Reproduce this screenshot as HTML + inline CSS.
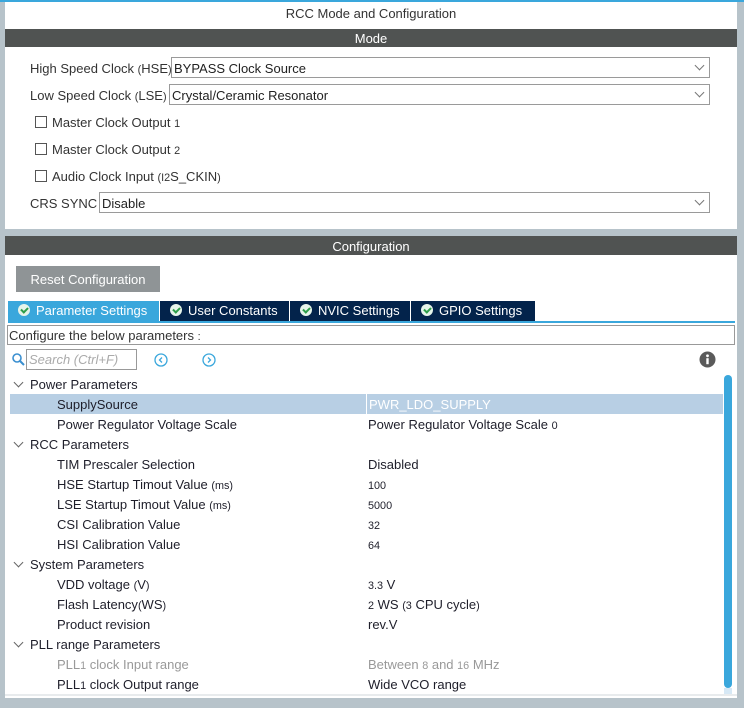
<!DOCTYPE html><html><head><meta charset="utf-8"><style>
*{margin:0;padding:0;box-sizing:border-box}
body{width:744px;height:708px;background:#b7c3ca;font-family:"Liberation Sans",sans-serif;font-size:13px;color:#333;position:relative;overflow:hidden}
.a{position:absolute;white-space:nowrap}
.sel{position:absolute;height:21px;border:1px solid #9a9a9a;background:#fff;padding:3px 0 0 2px;color:#222}
.sel:after{content:"";position:absolute;right:6px;top:4px;width:6px;height:6px;border-right:1px solid #777;border-bottom:1px solid #777;transform:rotate(45deg)}
.cb{position:absolute;width:12px;height:12px;border:1px solid #555;background:#fff}
.tab{position:absolute;top:301px;height:20px;background:#03234b;color:#fff;padding:2px 0 0 0;font-size:13px}
.tab i{display:inline-block;width:12px;height:12px;border-radius:50%;background:#e6f4ea;position:relative;vertical-align:-1px;margin:0 6px 0 10px}
.tab i:after{content:"";position:absolute;left:4px;top:2px;width:3px;height:5px;border-right:2px solid #2e9e4a;border-bottom:2px solid #2e9e4a;transform:rotate(45deg)}
.r{position:absolute;left:10px;width:713px;height:20px;color:#1e1e2a;padding-top:3px}
.r b{font-weight:normal;position:absolute;left:47px}
.r s{text-decoration:none;position:absolute;left:358px}
.h b{left:20px}
.h:before{content:"";position:absolute;left:5px;top:5px;width:6px;height:6px;border-right:1px solid #666;border-bottom:1px solid #666;transform:rotate(45deg)}
.g{color:#999}
</style></head><body>
<div class="a" style="left:0;top:0;width:744px;height:2px;background:#3aa7dc"></div>
<div class="a" style="left:5px;top:2px;width:732px;height:227px;background:#fff"></div>
<div class="a" style="left:5px;top:6px;width:732px;text-align:center;font-size:13px;color:#333">RCC Mode and Configuration</div>
<div class="a" style="left:5px;top:29px;width:732px;height:18px;background:#505352;color:#fff;text-align:center;padding-top:2px">Mode</div>
<div class="a" style="left:30px;top:61px">High Speed Clock <small>(</small>HSE<small>)</small></div>
<div class="sel" style="left:171px;top:57px;width:539px">BYPASS Clock Source</div>
<div class="a" style="left:30px;top:88px">Low Speed Clock <small>(</small>LSE<small>)</small></div>
<div class="sel" style="left:169px;top:84px;width:541px">Crystal/Ceramic Resonator</div>
<div class="cb" style="left:35px;top:116px"></div><div class="a" style="left:52px;top:115px">Master Clock Output <small>1</small></div>
<div class="cb" style="left:35px;top:143px"></div><div class="a" style="left:52px;top:142px">Master Clock Output <small>2</small></div>
<div class="cb" style="left:35px;top:170px"></div><div class="a" style="left:52px;top:169px">Audio Clock Input <small>(I2</small>S_CKIN<small>)</small></div>
<div class="a" style="left:30px;top:196px">CRS SYNC</div>
<div class="sel" style="left:99px;top:192px;width:611px">Disable</div>

<div class="a" style="left:5px;top:236px;width:732px;height:462px;background:#fff"></div>
<div class="a" style="left:5px;top:236px;width:732px;height:19px;background:#505352;color:#fff;text-align:center;padding-top:3px">Configuration</div>
<div class="a" style="left:16px;top:266px;width:144px;height:26px;background:#8f9496;color:#fff;text-align:center;padding-top:6px">Reset Configuration</div>
<div class="tab" style="left:8px;width:151px;background:#3aa7dc"><i></i>Parameter Settings</div>
<div class="tab" style="left:160px;width:129px"><i></i>User Constants</div>
<div class="tab" style="left:290px;width:120px"><i></i>NVIC Settings</div>
<div class="tab" style="left:411px;width:124px"><i></i>GPIO Settings</div>
<div class="a" style="left:8px;top:321px;width:727px;height:2px;background:#3aa7dc"></div>
<div class="a" style="left:7px;top:325px;width:728px;height:20px;border:1px solid #999;padding:2px 0 0 1px;color:#333">Configure the below parameters <small>:</small></div>
<svg class="a" style="left:12px;top:353px" width="13" height="13"><circle cx="5" cy="5" r="4" fill="none" stroke="#3a8fd0" stroke-width="1.6"/><path d="M8 8l4 4" stroke="#3a8fd0" stroke-width="2"/></svg>
<div class="a" style="left:26px;top:349px;width:111px;height:21px;border:1px solid #999;color:#aaa;font-style:italic;padding:2px 0 0 2px">Search (Ctrl+F)</div>
<svg class="a" style="left:154px;top:353px" width="14" height="14"><circle cx="7" cy="7" r="6" fill="none" stroke="#3aa7dc" stroke-width="1.3"/><path d="M8 4.5L5.5 7 8 9.5" fill="none" stroke="#3aa7dc" stroke-width="1.3"/></svg>
<svg class="a" style="left:202px;top:353px" width="14" height="14"><circle cx="7" cy="7" r="6" fill="none" stroke="#3aa7dc" stroke-width="1.3"/><path d="M6 4.5L8.5 7 6 9.5" fill="none" stroke="#3aa7dc" stroke-width="1.3"/></svg>
<svg class="a" style="left:699px;top:351px" width="17" height="17"><circle cx="8.5" cy="8.5" r="8" fill="#5a5a5a"/><circle cx="8.5" cy="4.8" r="1.4" fill="#fff"/><rect x="7.3" y="7.2" width="2.4" height="6" fill="#fff"/></svg>
<div class="a" style="left:724px;top:375px;width:8px;height:313px;background:#3aa7dc;border-radius:4px"></div>
<div class="a" style="left:724px;top:688px;width:8px;height:6px;background:#d6e8f5"></div>
<div class="a" style="left:5px;top:694px;width:732px;height:2px;background:#e8ebed"></div>

<div class="r h" style="top:374px"><b>Power Parameters</b></div>
<div class="r" style="top:394px;background:#b8cfe4"><b>SupplySource</b><s style="color:#fff;border-left:1px solid #fff;left:356px;padding-left:2px;height:20px;top:0;padding-top:3px">PWR_LDO_SUPPLY</s></div>
<div class="r" style="top:414px"><b>Power Regulator Voltage Scale</b><s>Power Regulator Voltage Scale <small>0</small></s></div>
<div class="r h" style="top:434px"><b>RCC Parameters</b></div>
<div class="r" style="top:454px"><b>TIM Prescaler Selection</b><s>Disabled</s></div>
<div class="r" style="top:474px"><b>HSE Startup Timout Value <small>(ms)</small></b><s><small>100</small></s></div>
<div class="r" style="top:494px"><b>LSE Startup Timout Value <small>(ms)</small></b><s><small>5000</small></s></div>
<div class="r" style="top:514px"><b>CSI Calibration Value</b><s><small>32</small></s></div>
<div class="r" style="top:534px"><b>HSI Calibration Value</b><s><small>64</small></s></div>
<div class="r h" style="top:554px"><b>System Parameters</b></div>
<div class="r" style="top:574px"><b>VDD voltage <small>(</small>V<small>)</small></b><s><small>3.3</small> V</s></div>
<div class="r" style="top:594px"><b>Flash Latency<small>(</small>WS<small>)</small></b><s><small>2</small> WS <small>(3</small> CPU cycle<small>)</small></s></div>
<div class="r" style="top:614px"><b>Product revision</b><s>rev.V</s></div>
<div class="r h" style="top:634px"><b>PLL range Parameters</b></div>
<div class="r g" style="top:654px"><b>PLL<small>1</small> clock Input range</b><s>Between <small>8</small> and <small>16</small> MHz</s></div>
<div class="r" style="top:674px"><b>PLL<small>1</small> clock Output range</b><s>Wide VCO range</s></div>
</body></html>
